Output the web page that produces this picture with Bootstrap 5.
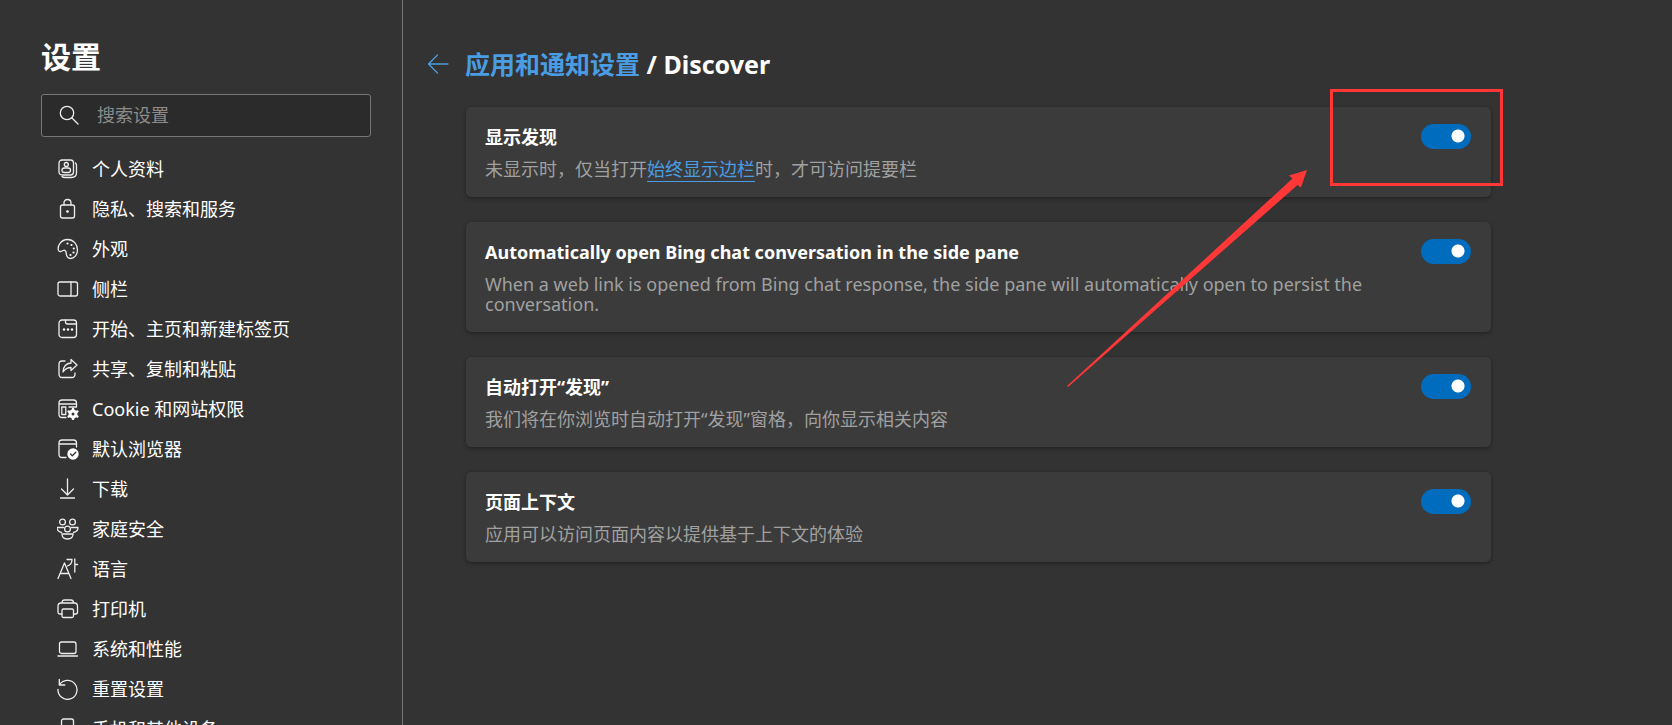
<!DOCTYPE html>
<html lang="zh-CN" data-bs-theme="dark">
<head>
<meta charset="utf-8">
<meta name="viewport" content="width=device-width, initial-scale=1">
<title>设置</title>
<link href="https://cdn.jsdelivr.net/npm/bootstrap@5.3.0/dist/css/bootstrap.min.css" rel="stylesheet">
<style>
  body { background: #333; color: #fff; font-family: "Noto Sans", "Noto Sans CJK SC", sans-serif; font-size: 18px; line-height: 24px; }
  .sidebar { width: 403px; border-right: 1px solid #767676; padding: 36px 31px 0 41px; }
  .sidebar h1 { font-size: 30px; line-height: 42px; margin-bottom: 16px; }
  .search-box { height: 43px; background: #2b2b2b; border: 1px solid #767676; border-radius: 3px; padding: 0 17px 2px; gap: 18px; }
  .search-box input { background: none; border: 0; outline: 0; color: #fff; padding: 0; line-height: 24px; }
  .search-box input::placeholder { color: #8c8c8c; opacity: 1; }
  .search-box .icon { width: 20px; height: 20px; }
  .side-menu { padding: 12px 0 0 16px; }
  .side-menu a { height: 40px; gap: 13px; padding: 0; color: #fff; white-space: nowrap; }
  .icon { width: 22px; height: 22px; fill: none; stroke: #eee; stroke-width: 1.3; stroke-linecap: round; stroke-linejoin: round; flex: none; }
  .icon .solid { fill: #fff; stroke: none; }
  .content { padding: 44px 24px 24px 24px; }
  .page-head { gap: 16px; margin-bottom: 22px; line-height: 41px; }
  .page-head h2 { font-size: 25px; line-height: 41px; margin: 0; }
  .page-head a, .option-text a { color: #4a9de3; }
  .page-head .icon { stroke: #4a9de3; }
  .options { max-width: 1064px; padding-left: 39px; gap: 25px; }
  .option { background: #3b3b3b; border: 0; border-radius: 5px; padding: 17px 20px 18px 19px; box-shadow: 0 2px 4px rgba(0,0,0,.25), 0 0 2px rgba(0,0,0,.2); }
  .option-title { line-height: 26px; margin-bottom: 9px; font-weight: 700; display: block; }
  .option-text { line-height: 20px; color: #a0a0a0; margin: 0; max-width: 890px; }
  .option-text a { text-decoration: none; border-bottom: 1px solid #4a9de3; }
  .form-check-input.toggle { width: 50px; height: 25px; margin: 0; border: 0; border-radius: 13px; flex: none; background: #006cbe radial-gradient(circle at 37px 12px, #fff 6px, transparent 7px); }
  .form-check-input.toggle:not(:checked) { background: #666 radial-gradient(circle at 13px 12px, #fff 6px, transparent 7px); }
  .callout-frame { position: absolute; top: -18px; right: -12px; width: 173px; height: 97px; border: 3px solid #ff3737; pointer-events: none; }
  .callout-arrow { position: absolute; top: 63px; right: 184px; width: 240px; height: 217px; fill: #ff3737; z-index: 2; pointer-events: none; }
</style>
</head>
<body>
<div class="d-flex vh-100 overflow-hidden">
  <aside class="sidebar flex-shrink-0 overflow-hidden">
    <h1 class="fw-bold">设置</h1>
    <label class="search-box d-flex align-items-center">
      <svg class="icon" viewBox="0 0 20 20"><circle cx="8" cy="8" r="6.7"/><path d="M13 13l6 6"/></svg>
      <input type="search" class="flex-grow-1" placeholder="搜索设置" aria-label="搜索设置">
    </label>
    <nav class="side-menu nav flex-column flex-nowrap">
      <a class="nav-link d-flex align-items-center" href="#"><svg class="icon" viewBox="0 0 22 22"><rect x="2" y="2" width="14.5" height="15" rx="3"/><path d="M18.5 5q1 1 1 2.500v7q0 5-5 5H8q-2 0-3-1"/><circle cx="9.300" cy="6.500" r="2"/><rect x="5" y="10" width="8.500" height="4.500" rx="2.200"/></svg>个人资料</a>
      <a class="nav-link d-flex align-items-center" href="#"><svg class="icon" viewBox="0 0 22 22"><rect x="3.500" y="7" width="14" height="13" rx="2"/><path d="M7 7V5q0-3.500 3.500-3.500T14 5v2"/><circle class="solid" cx="10.500" cy="13.500" r="1.300"/></svg>隐私、搜索和服务</a>
      <a class="nav-link d-flex align-items-center" href="#"><svg class="icon" viewBox="0 0 22 22"><path d="M1.500 12.500C0 8 4 1.500 10.500 1.500c6 0 10 5 10 10.500 0 5-3.500 8.500-7 8.500-4.500 0-4-4-4.500-6.500-.5-2-2-2-3-1.500-1.500.9-3.500 1.800-4.500 0z"/><g class="solid"><circle cx="10.500" cy="5.500" r="1.100"/><circle cx="14.500" cy="7" r="1.100"/><circle cx="16.800" cy="10.500" r="1.100"/><circle cx="16.500" cy="14.500" r="1.100"/><circle cx="13.500" cy="17" r="1.100"/></g></svg>外观</a>
      <a class="nav-link d-flex align-items-center" href="#"><svg class="icon" viewBox="0 0 22 22"><rect x="1" y="4" width="19.500" height="14" rx="2"/><path d="M14 4v14"/></svg>侧栏</a>
      <a class="nav-link d-flex align-items-center" href="#"><svg class="icon" viewBox="0 0 22 22"><rect x="2" y="2" width="17.500" height="17.500" rx="3"/><path d="M8.500 2v2q0 2 2 2h9"/><g class="solid"><circle cx="7" cy="11.500" r="1.200"/><circle cx="11" cy="11.500" r="1.200"/><circle cx="15" cy="11.500" r="1.200"/></g></svg>开始、主页和新建标签页</a>
      <a class="nav-link d-flex align-items-center" href="#"><svg class="icon" viewBox="0 0 22 22"><path d="M8 3H5Q2 3 2 6v10q0 3.500 3 3.500h10q3 0 3-3.500v-1M14 1.500l6 5.500-6 5.500V9.500q-5 0-8 4.500.5-8.500 8-9z"/></svg>共享、复制和粘贴</a>
      <a class="nav-link d-flex align-items-center" href="#"><svg class="icon" viewBox="0 0 22 22"><path d="M9 19.500H5q-3 0-3-3V5q0-3 3-3h11.500q3 0 3 3v4M2 6h17.500M4.800 9h4v7.500h-4zM12 9h7"/><circle cx="16" cy="16" r="3" stroke="#fff" stroke-width="3"/><path d="M16 11v1m0 8v1M11.700 13.500l.8.500m7 4 .8.500m-8.600 0 .8-.5m7-4 .8-.5" stroke="#fff" stroke-width="2.500"/></svg>Cookie 和网站权限</a>
      <a class="nav-link d-flex align-items-center" href="#"><svg class="icon" viewBox="0 0 22 22"><path d="M9 19.500H5q-3 0-3-3V5q0-3 3-3h11.500q3 0 3 3v4M2 6h17.500"/><circle class="solid" cx="16" cy="16" r="5.700"/><path d="M13.500 16l1.800 1.800 3.500-3.500" stroke="#333"/></svg>默认浏览器</a>
      <a class="nav-link d-flex align-items-center" href="#"><svg class="icon" viewBox="0 0 22 22"><path d="M10.500 1v16M4.500 11l6 6 6-6M3.500 20h14"/></svg>下载</a>
      <a class="nav-link d-flex align-items-center" href="#"><svg class="icon" viewBox="0 0 22 22"><circle cx="5.500" cy="4" r="2.900"/><circle cx="15.500" cy="4" r="2.900"/><circle cx="10.500" cy="11" r="2.900"/><path d="M4.500 14.500Q0 13.500 0 9.500h6.500M16.500 14.500q4.500-1 4.500-5h-6.500M5 16h11q0 5-5.500 5T5 16z"/></svg>家庭安全</a>
      <a class="nav-link d-flex align-items-center" href="#"><svg class="icon" viewBox="0 0 22 22"><path d="M1 20.500L7.500 5l6.500 15.500M3.500 15.500h8M10 1.500h5q0 5-4.500 6.500M17.800 1v13M18 6.500h2.500"/></svg>语言</a>
      <a class="nav-link d-flex align-items-center" href="#"><svg class="icon" viewBox="0 0 22 22"><path d="M5 16H3q-2 0-2-2V8.500q0-3.500 3-3.500h13.500q3 0 3 3.500V14q0 2-2 2h-2M5 5q0-3 2.500-3h6.500q2.500 0 2.500 3"/><rect x="5" y="11" width="11.500" height="8.500" rx="1.500"/></svg>打印机</a>
      <a class="nav-link d-flex align-items-center" href="#"><svg class="icon" viewBox="0 0 22 22"><rect x="2.500" y="4" width="16.500" height="11.500" rx="2"/><path d="M1 18h19.500"/></svg>系统和性能</a>
      <a class="nav-link d-flex align-items-center" href="#"><svg class="icon" viewBox="0 0 22 22"><path d="M2.300 1.500v5.500h5.500M2.300 7A9.500 9.500 0 1 1 1 11.300"/></svg>重置设置</a>
      <a class="nav-link d-flex align-items-center" href="#"><svg class="icon" viewBox="0 0 22 22"><rect x="4.500" y="1" width="12" height="19" rx="2"/><path d="M9 17h3"/></svg>手机和其他设备</a>
    </nav>
  </aside>

  <main class="content flex-grow-1 overflow-hidden">
    <header class="page-head d-flex align-items-center">
      <a class="d-flex" href="#" aria-label="返回"><svg class="icon" viewBox="0 0 22 22"><path d="M21 10H1.500M10.500 1L1.500 10l9 9"/></svg></a>
      <h2 class="fw-bold"><a class="text-decoration-none" href="#">应用和通知设置</a> / Discover</h2>
    </header>
    <div class="options d-flex flex-column">
      <section class="card option position-relative">
        <div class="d-flex justify-content-between align-items-start">
          <div>
            <label class="option-title" for="showDiscover">显示发现</label>
            <p class="option-text">未显示时，仅当打开<a href="#">始终显示边栏</a>时，才可访问提要栏</p>
          </div>
          <input class="form-check-input toggle" type="checkbox" role="switch" id="showDiscover" checked>
        </div>
        <div class="callout-frame"></div>
        <svg class="callout-arrow" viewBox="0 0 240 217" aria-hidden="true"><path d="M240 0L222 5.500l3.500 3L0 216l1 1L230.500 15l3.500 2.500z"/></svg>
      </section>
      <section class="card option">
        <div class="d-flex justify-content-between align-items-start">
          <div>
            <label class="option-title" for="autoChat">Automatically open Bing chat conversation in the side pane</label>
            <p class="option-text">When a web link is opened from Bing chat response, the side pane will automatically open to persist the conversation.</p>
          </div>
          <input class="form-check-input toggle" type="checkbox" role="switch" id="autoChat" checked>
        </div>
      </section>
      <section class="card option">
        <div class="d-flex justify-content-between align-items-start">
          <div>
            <label class="option-title" for="autoDiscover">自动打开“发现”</label>
            <p class="option-text">我们将在你浏览时自动打开“发现”窗格，向你显示相关内容</p>
          </div>
          <input class="form-check-input toggle" type="checkbox" role="switch" id="autoDiscover" checked>
        </div>
      </section>
      <section class="card option">
        <div class="d-flex justify-content-between align-items-start">
          <div>
            <label class="option-title" for="pageContext">页面上下文</label>
            <p class="option-text">应用可以访问页面内容以提供基于上下文的体验</p>
          </div>
          <input class="form-check-input toggle" type="checkbox" role="switch" id="pageContext" checked>
        </div>
      </section>
    </div>
  </main>
</div>
<script src="https://cdn.jsdelivr.net/npm/bootstrap@5.3.0/dist/js/bootstrap.bundle.min.js"></script>
</body>
</html>
